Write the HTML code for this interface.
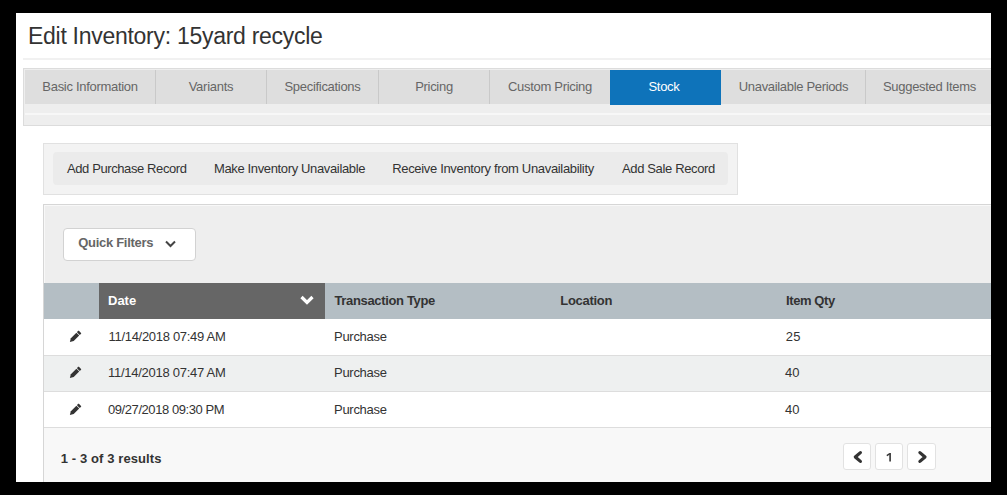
<!DOCTYPE html>
<html><head><meta charset="utf-8">
<style>
*{box-sizing:border-box;margin:0;padding:0}
html,body{width:1007px;height:495px;overflow:hidden;background:#000}
body{position:relative;font-family:"Liberation Sans",sans-serif;font-size:13px;color:#333}
.a{position:absolute}
.t{position:absolute;white-space:nowrap;line-height:15px}
#page{position:absolute;left:16px;top:13px;width:975px;height:469px;background:#fff;overflow:hidden}
</style></head><body>
<div id="page"></div>

<!-- title -->
<div class="t" style="left:28px;top:23px;font-size:23px;line-height:26px;letter-spacing:-0.28px;color:#333">Edit Inventory: 15yard recycle</div>
<div class="a" style="left:23px;top:58px;width:968px;height:2px;background:#f1f1f1"></div>

<!-- tabs container -->
<div class="a" style="left:23px;top:68px;width:980px;height:58px;border:1px solid #dcdcdc;background:#eeeeee"></div>
<div class="a" style="left:25px;top:113px;width:966px;height:2px;background:#f7f7f7"></div>
<div class="a" style="left:25px;top:70px;width:966px;height:34px;background:#dedede"></div>
<div class="a" style="left:155px;top:70px;width:1px;height:34px;background:#c9c9c9"></div>
<div class="a" style="left:266px;top:70px;width:1px;height:34px;background:#c9c9c9"></div>
<div class="a" style="left:378px;top:70px;width:1px;height:34px;background:#c9c9c9"></div>
<div class="a" style="left:489px;top:70px;width:1px;height:34px;background:#c9c9c9"></div>
<div class="a" style="left:865px;top:70px;width:1px;height:34px;background:#c9c9c9"></div>
<div class="a" style="left:610px;top:70px;width:111px;height:35px;background:#0e73ba"></div>
<div class="t" style="left:25px;top:79px;width:130px;text-align:center;color:#666;letter-spacing:-0.3px">Basic Information</div>
<div class="t" style="left:156px;top:79px;width:110px;text-align:center;color:#666;letter-spacing:-0.25px">Variants</div>
<div class="t" style="left:267px;top:79px;width:111px;text-align:center;color:#666;letter-spacing:-0.3px">Specifications</div>
<div class="t" style="left:379px;top:79px;width:110px;text-align:center;color:#666;letter-spacing:-0.3px">Pricing</div>
<div class="t" style="left:490px;top:79px;width:120px;text-align:center;color:#666;letter-spacing:-0.3px">Custom Pricing</div>
<div class="t" style="left:608.5px;top:79px;width:111px;text-align:center;color:#fff;letter-spacing:-0.3px">Stock</div>
<div class="t" style="left:722px;top:79px;width:143px;text-align:center;color:#666;letter-spacing:-0.33px">Unavailable Periods</div>
<div class="t" style="left:866px;top:79px;width:127px;text-align:center;color:#666;letter-spacing:-0.3px">Suggested Items</div>

<!-- action bar -->
<div class="a" style="left:43px;top:143px;width:695px;height:52px;border:1px solid #e1e1e1;background:#f3f3f3"></div>
<div class="a" style="left:53px;top:152px;width:675px;height:33px;border-radius:4px;background:#ebebeb"></div>
<div class="t" style="left:67px;top:161px;color:#333;letter-spacing:-0.4px">Add Purchase Record</div>
<div class="t" style="left:214px;top:161px;color:#333;letter-spacing:-0.36px">Make Inventory Unavailable</div>
<div class="t" style="left:392.2px;top:161px;color:#333;letter-spacing:-0.33px">Receive Inventory from Unavailability</div>
<div class="t" style="left:622px;top:161px;color:#333;letter-spacing:-0.36px">Add Sale Record</div>

<!-- panel -->
<div class="a" style="left:43px;top:204px;width:960px;height:290px;border:1px solid #d6d6d6;background:#eeeeee;box-shadow:inset 1px 1px 0 #f8f8f8"></div>
<div class="a" style="left:63px;top:228px;width:133px;height:33px;border:1px solid #d2d2d2;border-radius:4px;background:#fff"></div>
<div class="t" style="left:78.3px;top:235px;font-weight:bold;color:#666;letter-spacing:-0.35px;letter-spacing:-0.3px">Quick Filters</div>
<svg class="a" style="left:163.6px;top:239px" width="13" height="10" viewBox="0 0 13 10"><path d="M2 2.5 L6.5 7 L11 2.5" fill="none" stroke="#444" stroke-width="2"/></svg>

<!-- table header -->
<div class="a" style="left:44px;top:283px;width:947px;height:36px;background:#b4bec4"></div>
<div class="a" style="left:99px;top:283px;width:226px;height:36px;background:#666666"></div>
<div class="t" style="left:108px;top:293px;font-weight:bold;color:#fff">Date</div>
<svg class="a" style="left:299px;top:294px" width="16" height="12" viewBox="0 0 16 12"><path d="M2.5 3 L8 8.5 L13.5 3" fill="none" stroke="#fff" stroke-width="3.2"/></svg>
<div class="t" style="left:334.5px;top:293px;font-weight:bold;color:#333;letter-spacing:-0.35px">Transaction Type</div>
<div class="t" style="left:560.3px;top:293px;font-weight:bold;color:#333;letter-spacing:-0.3px">Location</div>
<div class="t" style="left:786px;top:293px;font-weight:bold;color:#333;letter-spacing:-0.4px">Item Qty</div>

<!-- rows -->
<div class="a" style="left:44px;top:319px;width:947px;height:37px;background:#fff;border-bottom:1px solid #dddddd"></div>
<div class="a" style="left:44px;top:356px;width:947px;height:36px;background:#eef0f0;border-bottom:1px solid #dddddd"></div>
<div class="a" style="left:44px;top:392px;width:947px;height:36px;background:#fff;border-bottom:1px solid #dddddd"></div>

<div class="t" style="left:108.5px;top:329px;color:#333;letter-spacing:-0.3px">11/14/2018 07:49 AM</div>
<div class="t" style="left:334px;top:329px;color:#333;letter-spacing:-0.28px">Purchase</div>
<div class="t" style="left:785.7px;top:329px;color:#333;letter-spacing:0.3px">25</div>
<div class="t" style="left:108px;top:365px;color:#333;letter-spacing:-0.27px">11/14/2018 07:47 AM</div>
<div class="t" style="left:334px;top:365px;color:#333;letter-spacing:-0.28px">Purchase</div>
<div class="t" style="left:785px;top:365px;color:#333">40</div>
<div class="t" style="left:108px;top:402px;color:#333;letter-spacing:-0.43px">09/27/2018 09:30 PM</div>
<div class="t" style="left:334px;top:402px;color:#333;letter-spacing:-0.28px">Purchase</div>
<div class="t" style="left:785px;top:402px;color:#333">40</div>

<!-- footer -->
<div class="a" style="left:44px;top:428px;width:947px;height:54px;background:#f8f8f8"></div>
<div class="t" style="left:60.8px;top:451px;font-weight:bold;color:#333;letter-spacing:0.1px">1 - 3 of 3 results</div>
<div class="a" style="left:843px;top:443px;width:28px;height:27px;border:1px solid #e2e2e2;border-radius:3px;background:#fff"></div>
<div class="a" style="left:875px;top:443px;width:28px;height:27px;border:1px solid #e2e2e2;border-radius:3px;background:#fff"></div>
<div class="a" style="left:907px;top:443px;width:29px;height:27px;border:1px solid #e2e2e2;border-radius:3px;background:#fff"></div>
<svg class="a" style="left:880px;top:448px" width="18" height="18" viewBox="880 448 18 18"><path d="M890.1 453.1 V461.6" stroke="#333" stroke-width="1.6"/><path d="M886.8 455.6 L889.8 453.6" stroke="#333" stroke-width="1.3"/></svg>


<!-- pencils -->
<svg class="a" style="left:65px;top:326px" width="20" height="20" viewBox="-10 -10 20 20"><g transform="translate(0.1 0.8) rotate(-45)"><path d="M-7.4 0 L-4.0 -2.0 L3.8 -2.0 L3.8 2.0 L-4.0 2.0 Z" fill="#333"/><rect x="4.5" y="-2.0" width="2.4" height="4.0" rx="0.5" fill="#333"/></g></svg>
<svg class="a" style="left:65px;top:362px" width="20" height="20" viewBox="-10 -10 20 20"><g transform="translate(0.1 0.8) rotate(-45)"><path d="M-7.4 0 L-4.0 -2.0 L3.8 -2.0 L3.8 2.0 L-4.0 2.0 Z" fill="#333"/><rect x="4.5" y="-2.0" width="2.4" height="4.0" rx="0.5" fill="#333"/></g></svg>
<svg class="a" style="left:65px;top:399px" width="20" height="20" viewBox="-10 -10 20 20"><g transform="translate(0.1 0.8) rotate(-45)"><path d="M-7.4 0 L-4.0 -2.0 L3.8 -2.0 L3.8 2.0 L-4.0 2.0 Z" fill="#333"/><rect x="4.5" y="-2.0" width="2.4" height="4.0" rx="0.5" fill="#333"/></g></svg>

<svg class="a" style="left:851px;top:450px" width="13" height="14" viewBox="0 0 13 14"><path d="M9.4 2.6 L4.3 7 L9.4 11.4" fill="none" stroke="#333" stroke-width="3.2" stroke-linecap="round" stroke-linejoin="round"/></svg>
<svg class="a" style="left:916px;top:450px" width="13" height="14" viewBox="0 0 13 14"><path d="M3.9 2.6 L9 7 L3.9 11.4" fill="none" stroke="#333" stroke-width="3.2" stroke-linecap="round" stroke-linejoin="round"/></svg>
<!-- black frame -->
<div class="a" style="left:0;top:0;width:1007px;height:13px;background:#000"></div>
<div class="a" style="left:0;top:482px;width:1007px;height:13px;background:#000"></div>
<div class="a" style="left:0;top:0;width:16px;height:495px;background:#000"></div>
<div class="a" style="left:991px;top:0;width:16px;height:495px;background:#000"></div>
</body></html>
